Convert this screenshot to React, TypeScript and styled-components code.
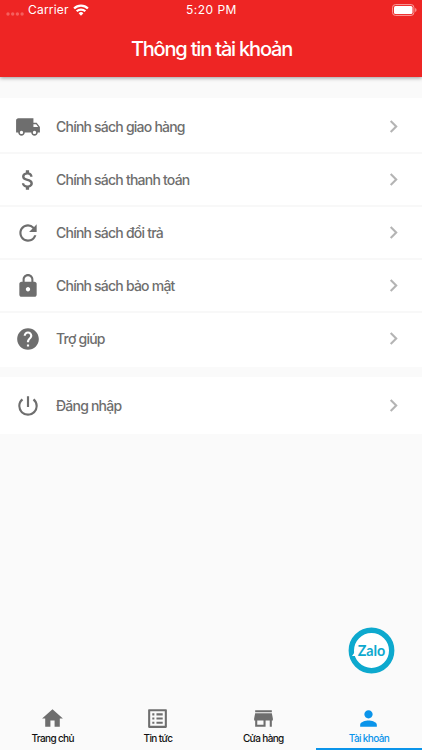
import React from 'react';
import styled, { createGlobalStyle } from 'styled-components';
import type { IconType } from 'react-icons';
import {
  MdLocalShipping, MdAttachMoney, MdRefresh, MdLock, MdHelp, MdPowerSettingsNew,
  MdChevronRight, MdHome, MdListAlt, MdStore, MdPerson,
} from 'react-icons/md';

const GlobalStyle = createGlobalStyle`
  * { box-sizing: border-box; }
  body { margin: 0; background: #fafafa; font-family: Inter, Roboto, sans-serif; }
`;

const Screen = styled.div`
  position: relative;
  width: 422px;
  height: 750px;
  display: flex;
  flex-direction: column;
  overflow: hidden;
  background: #fafafa;
`;

const Header = styled.header`
  height: 77px;
  flex: none;
  background: #ee2524;
  color: #fff;
  box-shadow: 0 1px 4px rgba(0, 0, 0, 0.4);
`;

const StatusBar = styled.div`
  height: 20px;
  display: grid;
  grid-template-columns: 1fr auto 1fr;
  align-items: center;
  padding: 0 5px 0 6px;
  font-size: 12px;
  line-height: 20px;
  letter-spacing: 0.48px;
`;

const Carrier = styled.div`
  display: flex;
  align-items: center;
  gap: 4px;
  letter-spacing: 0.2px;
`;

const SignalDots = styled.svg`
  width: 18px;
  height: 4px;
  margin-top: 8px;
  fill: #f5605e;
`;

const WifiIcon = styled.svg`
  width: 16px;
  height: 12px;
`;

const BatteryIcon = styled.svg`
  width: 25px;
  height: 12px;
  justify-self: end;
`;

const Title = styled.h1`
  margin: 0;
  height: 57px;
  line-height: 58px;
  text-align: center;
  font-size: 20px;
  font-weight: 500;
  letter-spacing: -1.18px;
  padding-left: 1px;
`;

const Content = styled.main`
  flex: 1;
  display: flex;
  flex-direction: column;
  gap: 10px;
  padding-top: 21px;
`;

const Group = styled.section`
  background: #fff;
  padding: 2px 0;
`;

const Row = styled.div`
  height: 53px;
  display: flex;
  align-items: center;
  padding: 0 16px 0 15px;
  color: #6e6e6e;

  & + & {
    box-shadow: 0 -1px 0 #f8f8f8, inset 0 1px 0 #f8f8f8;
  }
`;

const RowLabel = styled.span`
  flex: 1;
  margin-left: 15px;
  padding-bottom: 1px;
  font-size: 14px;
  font-weight: 500;
  letter-spacing: -0.78px;
`;

const Chevron = styled(MdChevronRight)`
  color: #b4b4b4;
`;

const TabBar = styled.nav`
  height: 54px;
  display: grid;
  grid-template-columns: repeat(3, 105.3px) 1fr;
`;

const Tab = styled.div<{ $active?: boolean }>`
  display: flex;
  flex-direction: column;
  align-items: center;
  padding-top: 9.5px;
  color: ${(p) => (p.$active ? '#0a94ea' : '#6e6e6e')};
  border-bottom: 2px solid ${(p) => (p.$active ? '#0a94ea' : 'transparent')};
`;

const TabLabel = styled.span<{ $active?: boolean }>`
  margin-top: 0.5px;
  font-size: 10px;
  line-height: 14px;
  font-weight: 500;
  letter-spacing: -0.65px;
  white-space: nowrap;
  color: ${(p) => (p.$active ? '#0a94ea' : '#111')};
`;

const ZaloButton = styled.svg`
  position: absolute;
  left: 348px;
  top: 627px;
  width: 47px;
  height: 47px;
`;

interface Entry {
  icon: IconType;
  label: string;
}

const groups: Entry[][] = [
  [
    { icon: MdLocalShipping, label: 'Chính sách giao hàng' },
    { icon: MdAttachMoney, label: 'Chính sách thanh toán' },
    { icon: MdRefresh, label: 'Chính sách đổi trả' },
    { icon: MdLock, label: 'Chính sách bảo mật' },
    { icon: MdHelp, label: 'Trợ giúp' },
  ],
  [{ icon: MdPowerSettingsNew, label: 'Đăng nhập' }],
];

const tabs: (Entry & { active?: boolean })[] = [
  { icon: MdHome, label: 'Trang chủ' },
  { icon: MdListAlt, label: 'Tin tức' },
  { icon: MdStore, label: 'Cửa hàng' },
  { icon: MdPerson, label: 'Tài khoản', active: true },
];

export default function App() {
  return (
    <Screen>
      <GlobalStyle />
      <Header>
        <StatusBar>
          <Carrier>
            <SignalDots viewBox="0 0 18 4">
              {[2, 6.7, 11.4, 16.1].map((x) => <circle key={x} cx={x} cy="2" r="1.7" />)}
            </SignalDots>
            <span>Carrier</span>
            <WifiIcon viewBox="0 0 16 12" fill="none" stroke="#fff" strokeWidth="2.3">
              <path d="M1.1 4.5a9.8 9.8 0 0 1 13.8 0" />
              <path d="M3.7 7.3a6.1 6.1 0 0 1 8.6 0" />
              <path d="M8 11.7L5.6 9.2a3.4 3.4 0 0 1 4.8 0z" fill="#fff" stroke="none" />
            </WifiIcon>
          </Carrier>
          <span>5:20 PM</span>
          <BatteryIcon viewBox="0 0 25 12">
            <rect x="0.6" y="0.6" width="21.3" height="10.8" rx="2.8" fill="none" stroke="#f8a09f" />
            <rect x="2" y="2" width="18.5" height="8" rx="1.5" fill="#fff" />
            <path d="M23.2 4v4q1.3-.6 1.3-2t-1.3-2z" fill="#f8a09f" />
          </BatteryIcon>
        </StatusBar>
        <Title>Thông tin tài khoản</Title>
      </Header>
      <Content>
        {groups.map((rows, i) => (
          <Group key={i}>
            {rows.map(({ icon: Icon, label }) => (
              <Row key={label}>
                <Icon size={26} />
                <RowLabel>{label}</RowLabel>
                <Chevron size={25} />
              </Row>
            ))}
          </Group>
        ))}
      </Content>
      <ZaloButton viewBox="0 0 47 47">
        <circle cx="23.5" cy="23.5" r="20.2" fill="#fff" stroke="#0da9ce" strokeWidth="5.4" />
        <path d="M7 21.5Q6.6 26.8 4 28.8Q6.4 29.6 8 28.2L9 25z" fill="#fff" />
        <text x="23.5" y="29.1" textAnchor="middle" textLength="27.6" lengthAdjust="spacingAndGlyphs"
          fontFamily="Lato, sans-serif" fontSize="14.5" fontWeight="700" fill="#0da9ce">Zalo</text>
      </ZaloButton>
      <TabBar>
        {tabs.map(({ icon: Icon, label, active }) => (
          <Tab key={label} $active={active}>
            <Icon size={25} />
            <TabLabel $active={active}>{label}</TabLabel>
          </Tab>
        ))}
      </TabBar>
    </Screen>
  );
}
